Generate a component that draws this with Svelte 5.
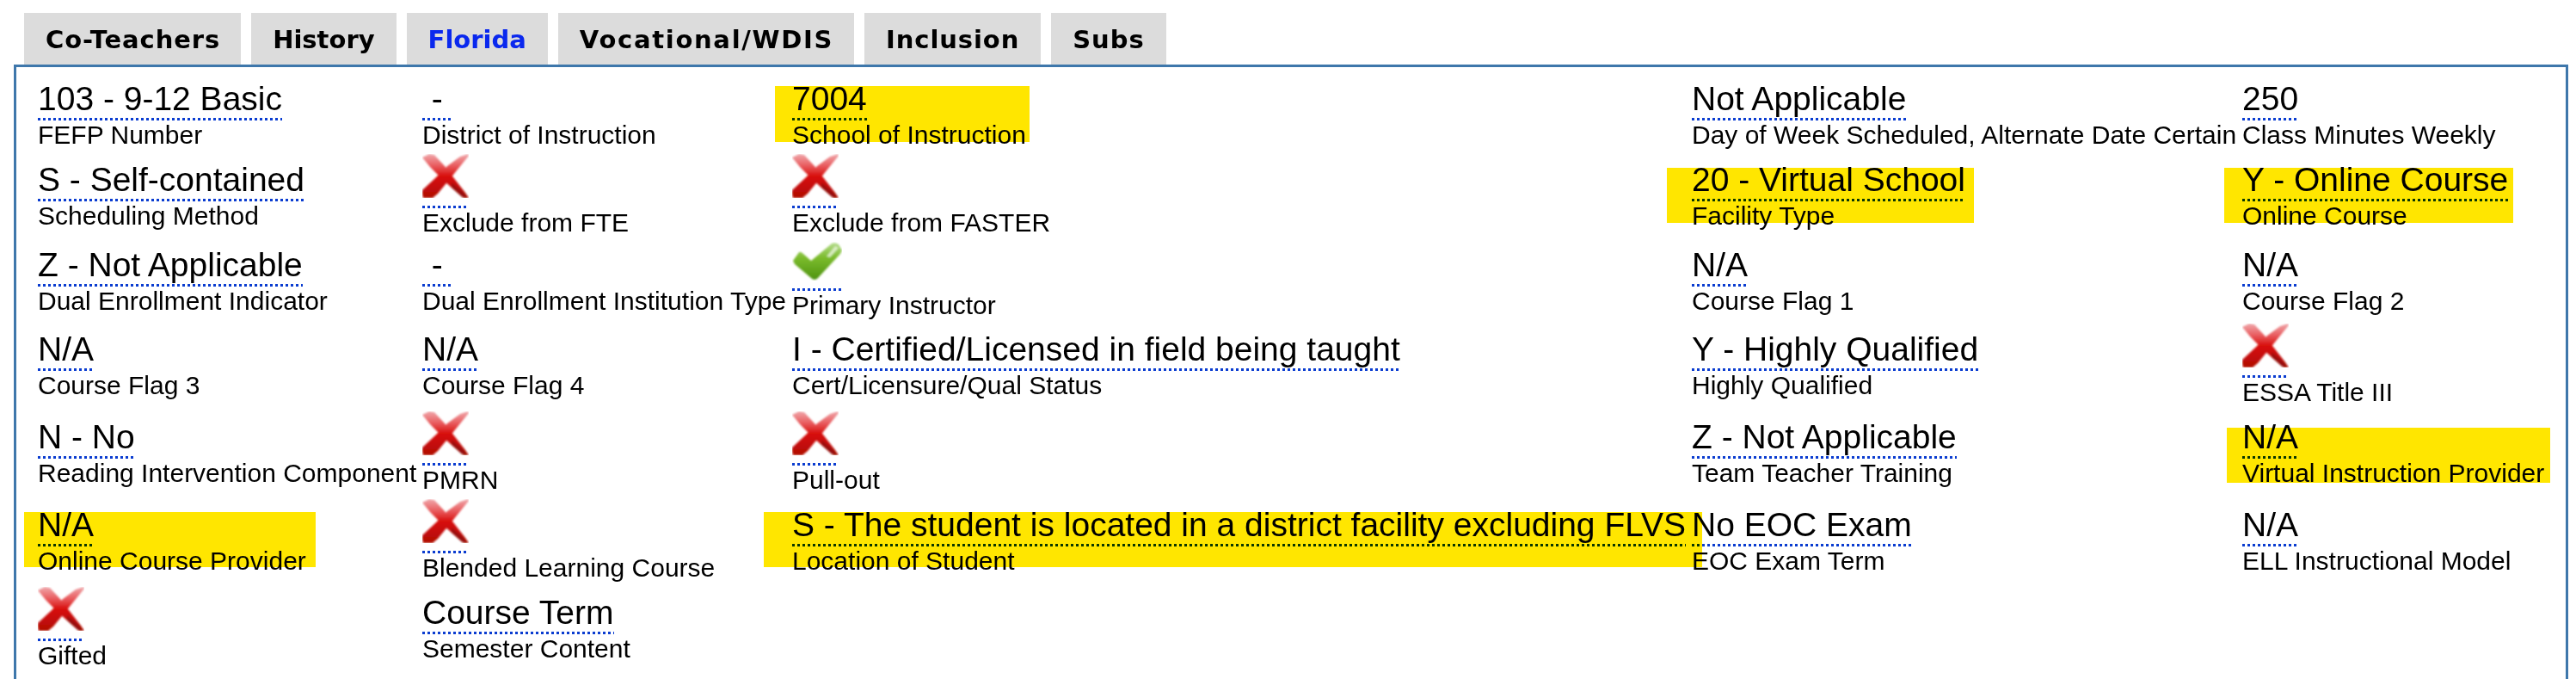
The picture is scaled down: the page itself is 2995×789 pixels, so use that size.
<script>
  const tabs = ['Co-Teachers', 'History', 'Florida', 'Vocational/WDIS', 'Inclusion', 'Subs'];
  const dash = '\u00a0-\u00a0';
  const cells = [
    ['103 - 9-12 Basic', 'FEFP Number'], [dash, 'District of Instruction'], ['7004', 'School of Instruction'], ['Not Applicable', 'Day of Week Scheduled, Alternate Date Certain'], ['250', 'Class Minutes Weekly'],
    ['S - Self-contained', 'Scheduling Method'], ['x', 'Exclude from FTE'], ['x', 'Exclude from FASTER'], ['20 - Virtual School', 'Facility Type'], ['Y - Online Course', 'Online Course'],
    ['Z - Not Applicable', 'Dual Enrollment Indicator'], [dash, 'Dual Enrollment Institution Type'], ['check', 'Primary Instructor'], ['N/A', 'Course Flag 1'], ['N/A', 'Course Flag 2'],
    ['N/A', 'Course Flag 3'], ['N/A', 'Course Flag 4'], ['I - Certified/Licensed in field being taught', 'Cert/Licensure/Qual Status'], ['Y - Highly Qualified', 'Highly Qualified'], ['x', 'ESSA Title III'],
    ['N - No', 'Reading Intervention Component'], ['x', 'PMRN'], ['x', 'Pull-out'], ['Z - Not Applicable', 'Team Teacher Training'], ['N/A', 'Virtual Instruction Provider'],
    ['N/A', 'Online Course Provider'], ['x', 'Blended Learning Course'], ['S - The student is located in a district facility excluding FLVS', 'Location of Student'], ['No EOC Exam', 'EOC Exam Term'], ['N/A', 'ELL Instructional Model'],
    ['x', 'Gifted'], ['Course Term', 'Semester Content']
  ];
  const marks = ['m-school', 'm-facility', 'm-online', 'm-virtual', 'm-provider', 'm-location'];
</script>

<svg class="defs" width="0" height="0" aria-hidden="true">
  <defs>
    <linearGradient id="xg" gradientUnits="userSpaceOnUse" x1="0" y1="0" x2="0" y2="51">
      <stop offset="0" stop-color="#f0a8ac" />
      <stop offset="0.28" stop-color="#e8585a" />
      <stop offset="0.5" stop-color="#d8120e" />
      <stop offset="1" stop-color="#b00a04" />
    </linearGradient>
    <linearGradient id="cg" x1="0" y1="0" x2="0" y2="1">
      <stop offset="0" stop-color="#b6dd8e" />
      <stop offset="0.4" stop-color="#7cbc2c" />
      <stop offset="1" stop-color="#4f9412" />
    </linearGradient>
    <filter id="soft" x="-5%" y="-5%" width="110%" height="110%"><feGaussianBlur stdDeviation="0.9" /></filter>
  </defs>
</svg>

<div class="page">
  <nav class="tabs">
    {#each tabs as t}
      <div class="tab" class:active={t === 'Florida'} class:coteach={t === 'Co-Teachers'} class:voc={t === 'Vocational/WDIS'} class:inc={t === 'Inclusion'} class:subs={t === 'Subs'}>{t}</div>
    {/each}
  </nav>
  <section class="panel">
    <div class="grid">
      {#each cells as [v, l]}
        <div class="cell">
          <div class="val">
            {#if v === 'x'}
              <svg class="ico" width="54" height="51" viewBox="0 0 54 51">
                <g filter="url(#soft)">
                  <path d="M0 4 L8 0 L14 1 L26 14 L36 27 L50 45 L54 51 L48 51 L34 39 L24 30 L9 15 Z" fill="url(#xg)" />
                  <path d="M53 0 L54 2 L36 24 L18 46 L12 51 L1 51 L0 47 L0 42 L15 28 L29 14 L44 3 Z" fill="url(#xg)" />
                  <path d="M34 33 L48 45 L52 51 L46 50 L34 39 Z" fill="#7c0e0a" opacity="0.55" />
                </g>
              </svg>
            {:else if v === 'check'}
              <svg class="ico" width="58" height="45" viewBox="0 0 58 45">
                <g filter="url(#soft)">
                  <path d="M1 22 L8 12 Q10 11 13 14 L22 22 L46 2 Q50 0 54 3 L58 10 L56 14 L30 42 Q26 46 22 42 L3 26 Z" fill="url(#cg)" />
                  <path d="M40 17 L50 5 L54 7 L44 18 Z" fill="#e8f4d8" opacity="0.8" />
                </g>
              </svg>
            {:else}
              {v}
            {/if}
          </div>
          <div class="lab">{l}</div>
        </div>
      {/each}
    </div>
    {#each marks as m}
      <div class="mark {m}"></div>
    {/each}
  </section>
</div>

<style>
  :global(body) {
    margin: 0;
    background: #fff;
    overflow: hidden;
  }
  .defs {
    position: absolute;
  }
  .page {
    height: 789px;
    overflow: hidden;
    font-family: "Liberation Sans", Arial, sans-serif;
    color: #000;
    padding-top: 15px;
    box-sizing: border-box;
  }
  .tabs {
    display: flex;
    gap: 12px;
    margin-left: 28px;
  }
  .tab {
    background: #dcdcdc;
    font-family: "DejaVu Sans", Verdana, sans-serif;
    font-size: 29px;
    font-weight: 700;
    height: 60px;
    line-height: 62px;
    padding: 0 25px;
    white-space: nowrap;
  }
  .tab.coteach {
    letter-spacing: 0.9px;
    padding-right: 24px;
  }
  .tab.voc {
    letter-spacing: 1.7px;
    padding-right: 24px;
  }
  .tab.inc {
    letter-spacing: 0.9px;
  }
  .tab.subs {
    letter-spacing: 1px;
  }
  .tab.active {
    color: #0a28ee;
  }
  .panel {
    position: relative;
    margin-left: 16px;
    width: 2970px;
    height: 800px;
    box-sizing: border-box;
    border: 3px solid #3e77ab;
    padding: 15px 0 0 25px;
  }
  .grid {
    display: grid;
    grid-template-columns: 447px 430px 1046px 640px 300px;
    row-gap: 4.8px;
    align-items: center;
  }
  .cell {
    white-space: nowrap;
  }
  .val {
    width: fit-content;
    font-size: 39px;
    padding-bottom: 3px;
    background: linear-gradient(to right, #0a3cd0 50%, transparent 50%) left bottom / 6px 3px repeat-x;
  }
  .ico {
    display: inline;
    vertical-align: baseline;
  }
  .lab {
    font-size: 30px;
  }
  .mark {
    position: absolute;
    background: #ffe600;
    mix-blend-mode: multiply;
    pointer-events: none;
  }
  .m-school { left: 882px; top: 22px; width: 296px; height: 65px; }
  .m-facility { left: 1919px; top: 117px; width: 357px; height: 64px; }
  .m-online { left: 2567px; top: 117px; width: 336px; height: 64px; }
  .m-virtual { left: 2570px; top: 419px; width: 376px; height: 64px; }
  .m-provider { left: 9px; top: 517px; width: 339px; height: 64px; }
  .m-location { left: 869px; top: 517px; width: 1091px; height: 64px; }
</style>
